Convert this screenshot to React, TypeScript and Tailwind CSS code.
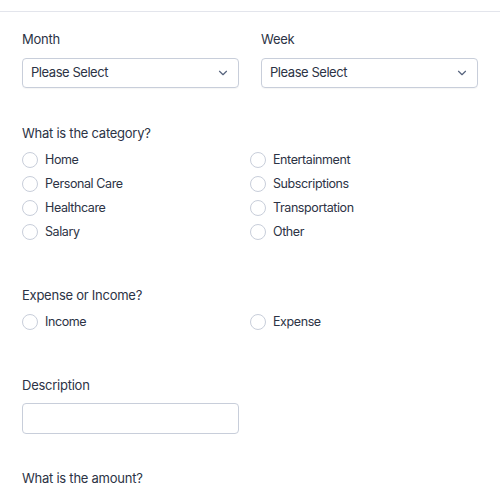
import { ChevronDown } from 'lucide-react';

const Radio = ({ label }: { label: string }) => (
    <label className="flex items-center gap-[7px] h-6 text-[12.5px] tracking-[-0.4px] text-[#2c3345]">
        <span className="w-4 h-4 rounded-full border border-[#c8ceda] bg-white shrink-0" />
        <span>{label}</span>
    </label>
);

const Select = ({ label }: { label: string }) => (
    <div className="flex flex-col">
        <div className="text-[13px] tracking-[-0.25px] text-[#2c3345] h-5 leading-5">{label}</div>
        <div className="mt-[9px] h-[30px] border border-[#c8ceda] rounded-[4px] flex items-center justify-between pl-2 pr-2 text-[13px] tracking-[-0.45px] text-[#2c3345] shadow-[0_1px_1px_rgba(0,0,0,0.04)]">
            <span>Please Select</span>
            <ChevronDown size={14} strokeWidth={2} className="text-[#57647e]" />
        </div>
    </div>
);

export default function App() {
    const left = ['Home', 'Personal Care', 'Healthcare', 'Salary'];
    const right = ['Entertainment', 'Subscriptions', 'Transportation', 'Other'];

    return (
        <div className="w-[500px] h-[484px] overflow-hidden bg-white" style={{ fontFamily: 'Inter, "Noto Sans", sans-serif' }}>
            <div className="h-3 border-b border-[#e3e5ec]" />
            <div className="px-[22px] pt-[17px]">
                <div className="grid grid-cols-2 gap-[22px]">
                    <Select label="Month" />
                    <Select label="Week" />
                </div>

                <div className="mt-[35px] text-[13px] tracking-[-0.25px] text-[#2c3345] h-5 leading-5">What is the category?</div>
                <div className="mt-[5px] grid grid-cols-2">
                    <div className="flex flex-col">
                        {left.map((l) => <Radio key={l} label={l} />)}
                    </div>
                    <div className="flex flex-col">
                        {right.map((l) => <Radio key={l} label={l} />)}
                    </div>
                </div>

                <div className="mt-[41px] text-[13px] tracking-[-0.25px] text-[#2c3345] h-5 leading-5">Expense or Income?</div>
                <div className="mt-[5px] grid grid-cols-2">
                    <Radio label="Income" />
                    <Radio label="Expense" />
                </div>

                <div className="mt-[41px] text-[13px] tracking-[-0.25px] text-[#2c3345] h-5 leading-5">Description</div>
                <div className="mt-[8px] w-[217px] h-[31px] border border-[#c8ceda] rounded-[4px]" />

                <div className="mt-[38px] text-[13px] tracking-[-0.25px] text-[#2c3345] h-[13px] leading-[13px]">What is the amount?</div>
            </div>
        </div>
    );
}
